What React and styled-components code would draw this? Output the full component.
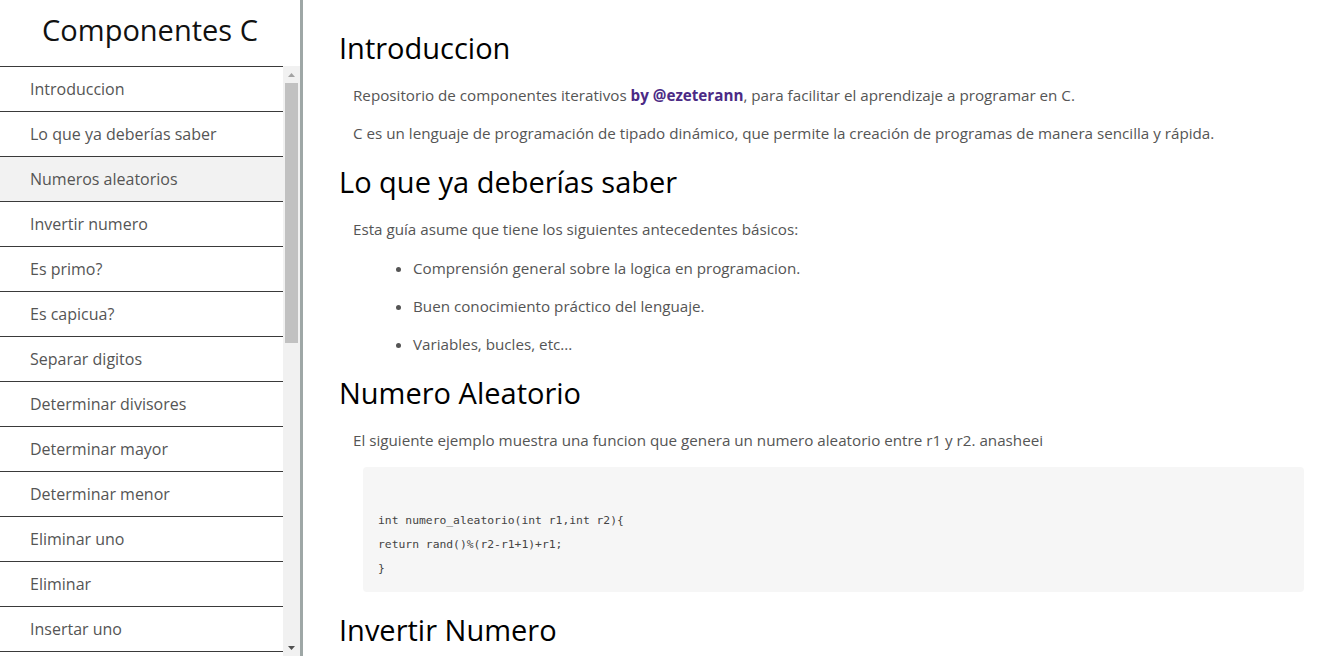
import React from "react";
import styled, { createGlobalStyle } from "styled-components";

const GlobalStyle = createGlobalStyle`
  html, body {
    margin: 0;
    padding: 0;
    height: 100%;
    overflow: hidden;
  }
  body {
    font-family: "Open Sans", "Noto Sans", sans-serif;
    background: #fff;
  }
`;

const items = [
  "Introduccion",
  "Lo que ya deberías saber",
  "Numeros aleatorios",
  "Invertir numero",
  "Es primo?",
  "Es capicua?",
  "Separar digitos",
  "Determinar divisores",
  "Determinar mayor",
  "Determinar menor",
  "Eliminar uno",
  "Eliminar",
  "Insertar uno",
  "Insertar ordenado",
  "Ordenar vector",
  "Buscar elemento",
  "Contar ocurrencias",
  "Suma de digitos",
  "Factorial",
  "Fibonacci",
  "Potencia",
  "Maximo comun divisor",
  "Minimo comun multiplo",
  "Matriz transpuesta",
  "Cadena invertida",
  "Es palindromo?",
  "Contar vocales",
  "Pila y cola",
];

const Layout = styled.div`
  display: flex;
  height: 100vh;
  overflow: hidden;
`;

const Sidebar = styled.aside`
  width: 300px;
  flex: none;
  display: flex;
  flex-direction: column;
  border-right: 3px solid #9ea7a6;
`;

const Title = styled.h1`
  margin: 0;
  height: 66px;
  display: flex;
  align-items: center;
  justify-content: center;
  font-size: 29px;
  font-weight: 400;
  color: #111;
  padding-bottom: 8px;
  box-sizing: border-box;
`;

const NavWrap = styled.div`
  position: relative;
  flex: 1;
  overflow: hidden;
`;

const NavList = styled.ul`
  list-style: none;
  margin: 0;
  padding: 0;
  width: 283px;
`;

const NavItem = styled.li`
  height: 45px;
  box-sizing: border-box;
  border-top: 1px solid #3a3a3a;
  display: flex;
  align-items: center;
  padding-left: 30px;
  font-size: 16px;
  color: #555;
  background: ${(p) => (p.$active ? "#f2f2f2" : "#fff")};
  cursor: pointer;
`;

const ScrollTrack = styled.div`
  position: absolute;
  top: 0;
  right: 0;
  bottom: 0;
  width: 17px;
  background: #f1f1f1;
  display: flex;
  flex-direction: column;
`;

const ScrollArrow = styled.div`
  height: 17px;
  flex: none;
  display: flex;
  align-items: center;
  justify-content: center;
`;

const ScrollThumb = styled.div`
  height: 260px;
  margin: 0 2px;
  background: #c1c1c1;
`;

const ScrollSpace = styled.div`
  flex: 1;
`;

const Main = styled.main`
  flex: 1;
  overflow: hidden;
  padding: 28px 26px 0 36px;
`;

const Heading = styled.h2`
  margin: 18px 0 0;
  font-size: 29px;
  line-height: 40px;
  font-weight: 400;
  color: #000;

  &:first-child {
    margin-top: 0;
  }
`;

const Text = styled.p`
  margin: 16px 0 0 14px;
  font-size: 15.2px;
  line-height: 22px;
  color: #555;
`;

const Link = styled.a`
  color: #4b2a85;
  font-weight: 700;
  text-decoration: none;
`;

const Bullets = styled.ul`
  margin: 17px 0 0;
  padding-left: 74px;
`;

const Bullet = styled.li`
  margin-top: 16px;
  font-size: 15.2px;
  line-height: 22px;
  color: #555;

  &:first-child {
    margin-top: 0;
  }
`;

const Code = styled.pre`
  margin: 16px 0 0 24px;
  padding: 17px 15px 12px;
  background: #f6f6f6;
  border-radius: 4px;
  font-family: "DejaVu Sans Mono", "Liberation Mono", monospace;
  font-size: 11.35px;
  line-height: 24px;
  color: #444;
`;

const Arrow = ({ down, color }) => (
  <svg width="7" height="4" viewBox="0 0 7 4">
    <path d={down ? "M0 0H7L3.5 4Z" : "M0 4H7L3.5 0Z"} fill={color} />
  </svg>
);

export default function App() {
  return (
    <>
      <GlobalStyle />
      <Layout>
        <Sidebar>
          <Title>Componentes C</Title>
          <NavWrap>
            <NavList>
              {items.map((it) => (
                <NavItem key={it} $active={it === "Numeros aleatorios"}>
                  {it}
                </NavItem>
              ))}
            </NavList>
            <ScrollTrack>
              <ScrollArrow>
                <Arrow color="#a3a3a3" />
              </ScrollArrow>
              <ScrollThumb />
              <ScrollSpace />
              <ScrollArrow>
                <Arrow down color="#505050" />
              </ScrollArrow>
            </ScrollTrack>
          </NavWrap>
        </Sidebar>
        <Main>
          <Heading>Introduccion</Heading>
          <Text>
            Repositorio de componentes iterativos <Link href="#">by @ezeterann</Link>, para
            facilitar el aprendizaje a programar en C.
          </Text>
          <Text>
            C es un lenguaje de programación de tipado dinámico, que permite la creación de
            programas de manera sencilla y rápida.
          </Text>
          <Heading>Lo que ya deberías saber</Heading>
          <Text>Esta guía asume que tiene los siguientes antecedentes básicos:</Text>
          <Bullets>
            <Bullet>Comprensión general sobre la logica en programacion.</Bullet>
            <Bullet>Buen conocimiento práctico del lenguaje.</Bullet>
            <Bullet>Variables, bucles, etc...</Bullet>
          </Bullets>
          <Heading>Numero Aleatorio</Heading>
          <Text>
            El siguiente ejemplo muestra una funcion que genera un numero aleatorio entre r1 y
            r2. anasheei
          </Text>
          <Code>{`
int numero_aleatorio(int r1,int r2){
return rand()%(r2-r1+1)+r1;
}`}</Code>
          <Heading>Invertir Numero</Heading>
          <Text>El siguiente ejemplo muestra una funcion que invierte un numero.</Text>
        </Main>
      </Layout>
    </>
  );
}
